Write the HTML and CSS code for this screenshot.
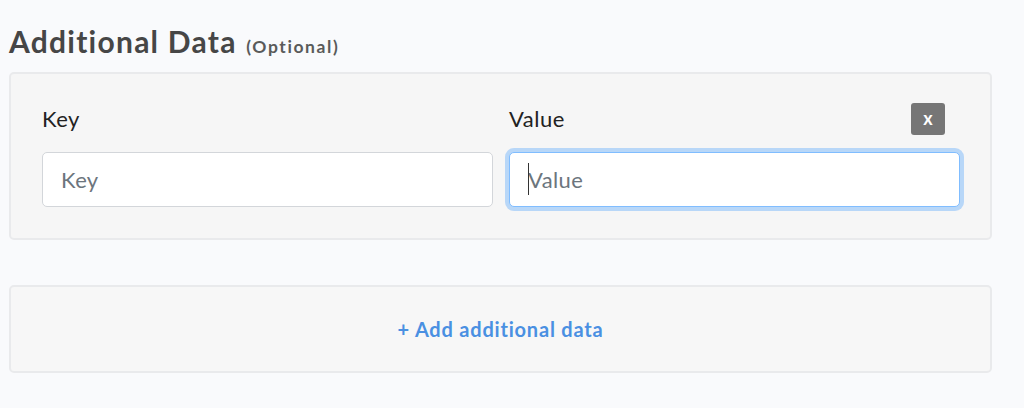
FILE: index.html
```html
<!DOCTYPE html>
<html>
<head>
<meta charset="utf-8">
<link rel="stylesheet" href="styles.css">
</head>
<body>
<div class="page">
  <h2 class="title">Additional Data <span class="optional">(Optional)</span></h2>
  <div class="card">
    <div class="head-row">
      <div class="label">Key</div>
      <div class="label label-value">
        <span>Value</span>
        <button class="remove" type="button">x</button>
      </div>
    </div>
    <div class="input-row">
      <div class="field"><input class="input" type="text" placeholder="Key"></div>
      <div class="field"><input class="input input-focus" type="text" placeholder="Value"><span class="caret"></span></div>
    </div>
  </div>
  <div class="add-card">
    <a class="add-link" href="#">+ Add additional data</a>
  </div>
</div>
</body>
</html>
```
FILE: styles.css
```css
html, body {
  margin: 0;
  padding: 0;
  background: #f9fafc;
  font-family: Lato, "Open Sans", sans-serif;
}
.page {
  padding: 23px 0 0 9px;
  width: 983px;
}
.title {
  margin: 0 0 13px 0;
  font-size: 30px;
  line-height: 36px;
  font-weight: 700;
  letter-spacing: 1.25px;
  color: #464646;
}
.optional {
  font-size: 17.5px;
  line-height: 1;
  font-weight: 700;
  letter-spacing: 1.6px;
  color: #5a5a5a;
  margin-left: 1px;
}
.card {
  background: #f6f6f6;
  border: 2px solid #e9eaec;
  border-radius: 5px;
  padding: 29px 30px 31px 31px;
}
.head-row {
  display: grid;
  grid-template-columns: 1fr 1fr;
  column-gap: 16px;
  height: 32px;
  align-items: center;
}
.label {
  font-size: 22px;
  line-height: 1.2;
  color: #222;
  letter-spacing: 0.5px;
}
.label-value {
  display: flex;
  align-items: center;
  justify-content: space-between;
  padding-right: 15px;
}
.remove {
  width: 34px;
  height: 32px;
  border: none;
  border-radius: 3px;
  background: #767676;
  color: #fff;
  font-family: Lato, sans-serif;
  font-weight: 700;
  font-size: 18px;
  line-height: 30px;
  padding: 0 0 2px 0;
}
.input-row {
  display: grid;
  grid-template-columns: 1fr 1fr;
  column-gap: 16px;
  margin-top: 17px;
}
.field {
  position: relative;
}
.input {
  box-sizing: border-box;
  width: 100%;
  height: 55px;
  border: 1px solid #d3d6da;
  border-radius: 5px;
  background: #fff;
  padding: 0 18px;
  font-family: Lato, sans-serif;
  font-size: 22px;
  letter-spacing: 0.4px;
  color: #495057;
  outline: none;
}
.input::placeholder {
  color: #6c757d;
}
.input-focus {
  border-color: #80bdff;
  box-shadow: 0 0 0 4px rgba(0, 123, 255, 0.25);
}
.caret {
  position: absolute;
  left: 19px;
  top: 11px;
  width: 1px;
  height: 32px;
  background: #333;
}
.add-card {
  margin-top: 45px;
  height: 84px;
  background: #f7f7f7;
  border: 2px solid #e9eaec;
  border-radius: 5px;
  display: flex;
  align-items: center;
  justify-content: center;
}
.add-link {
  color: #4a90e2;
  font-weight: 700;
  font-size: 20px;
  letter-spacing: 0.8px;
  text-decoration: none;
}
```
